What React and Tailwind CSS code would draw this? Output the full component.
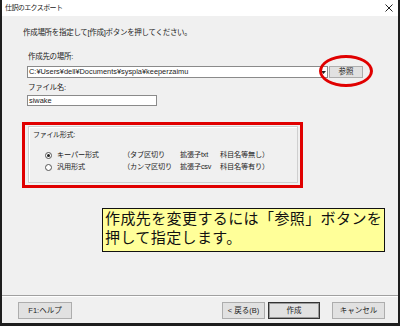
import React from "react";

const jp = { fontFamily: '"Liberation Sans", "Noto Sans CJK JP", sans-serif' };

function Radio({ checked }) {
  return (
    <span className="w-[7px] h-[7px] rounded-full border border-[#555] bg-white flex items-center justify-center shrink-0">
      {checked && <span className="w-[3px] h-[3px] rounded-full bg-[#222]" />}
    </span>
  );
}

function Btn({ children, w, h = "h-[17px]", primary, className = "" }) {
  return (
    <div
      className={`flex items-center justify-center text-[7.5px] text-[#222] bg-[#e1e1e1] ${
        primary ? "border border-[#333] shadow-[inset_0_0_0_1px_#9a9a9a]" : "border border-[#adadad]"
      } ${w} ${h} ${className}`}
    >
      {children}
    </div>
  );
}

export default function App() {
  const rows = [
    { checked: true, name: "キーパー形式", sep: "（タブ区切り", ext: "拡張子txt", note: "科目名等無し）" },
    { checked: false, name: "汎用形式", sep: "（カンマ区切り", ext: "拡張子csv", note: "科目名等有り）" },
  ];

  return (
    <div className="w-[400px] h-[326px] bg-[#f0f0f0] flex flex-col border-x-2 border-b-[3px] border-[#1e1e1e] relative text-[#222]" style={jp}>
      {/* title bar */}
      <div className="h-[16px] bg-white flex items-center justify-between pl-[3px] pr-[5px] shrink-0">
        <span className="text-[7px] tracking-[-0.6px]">仕訳のエクスポート</span>
        <svg width="8" height="8" viewBox="0 0 8 8">
          <path d="M0.5 0.5 L7.5 7.5 M7.5 0.5 L0.5 7.5" stroke="#222" strokeWidth="1" />
        </svg>
      </div>

      {/* instruction */}
      <div className="mt-[12px] pl-[21px] text-[7.5px] leading-[10px] tracking-[-0.3px]">
        作成場所を指定して[作成]ボタンを押してください。
      </div>

      {/* location */}
      <div className="mt-[14px] pl-[26px] text-[7.5px] leading-[10px] tracking-[-0.3px]">作成先の場所:</div>
      <div className="mt-[4px] ml-[25px] flex items-center">
        <div className="w-[301px] h-[12px] bg-white border border-[#8a8a8a] flex items-center pl-[1px] relative">
          <span className="text-[7.4px] leading-[10px]">C:¥Users¥dell¥Documents¥syspla¥keeperzaimu</span>
          <span className="absolute right-0 top-0 h-full w-[8px] flex items-center justify-center">
            <svg width="5" height="3" viewBox="0 0 5 3">
              <path d="M0 0 L5 0 L2.5 3 Z" fill="#222" />
            </svg>
          </span>
        </div>
        <Btn w="w-[34px]" h="h-[12px]" className="ml-[1px]">参照</Btn>
      </div>

      {/* file name */}
      <div className="mt-[5px] pl-[26px] text-[7.5px] leading-[10px] tracking-[-0.3px]">ファイル名:</div>
      <div className="mt-[2px] ml-[25px] w-[130px] h-[11px] bg-white border border-[#8a8a8a] flex items-center pl-[1px]">
        <span className="text-[7.4px] leading-[9px]">siwake</span>
      </div>

      {/* file format, red highlight */}
      <div className="mt-[16px] ml-[20px] w-[281px] h-[66px] border-[3px] border-[#e00000] pt-[1px] pl-[3px] pr-[2px] pb-[2px] flex">
        <div className="flex-1 border border-[#cfcfcf] shadow-[inset_1px_1px_0_#fff] flex flex-col pl-[4px] pt-[3px]">
          <div className="text-[7px] leading-[10px] tracking-[-0.3px]">ファイル形式:</div>
          <div className="mt-[9px] flex flex-col">
            {rows.map((r) => (
              <div key={r.name} className="h-[12px] flex items-center text-[7.2px] tracking-[-0.2px] pl-[12px]">
                <Radio checked={r.checked} />
                <span className="ml-[5px] w-[66px]">{r.name}</span>
                <span className="w-[57px]">{r.sep}</span>
                <span className="w-[40px]">{r.ext}</span>
                <span>{r.note}</span>
              </div>
            ))}
          </div>
        </div>
      </div>

      {/* yellow callout */}
      <div className="mt-[20px] ml-[100px] w-[283px] h-[44px] bg-[#ffff99] border border-[#111] pl-[2px] text-[15px] leading-[19px] tracking-[0.4px] text-[#111]">
        作成先を変更するには「参照」ボタンを
        <br />
        押して指定します。
      </div>

      <div className="flex-1" />

      {/* footer */}
      <div className="border-t border-[#a0a0a0] shadow-[inset_0_1px_0_#fff] pt-[6px] pb-[4px] flex items-center">
        <Btn w="w-[54px]" className="ml-[16px]">F1:ヘルプ</Btn>
        <Btn w="w-[43px]" className="ml-[150px]">&lt; 戻る(B)</Btn>
        <Btn w="w-[52px]" primary className="ml-[3px]">作成</Btn>
        <Btn w="w-[53px]" className="ml-[12px]">キャンセル</Btn>
      </div>

      {/* red circle around browse button */}
      <div className="absolute left-[317px] top-[55px] w-[54px] h-[32px] rounded-[50%] border-[3px] border-[#e00000] pointer-events-none" />
    </div>
  );
}
